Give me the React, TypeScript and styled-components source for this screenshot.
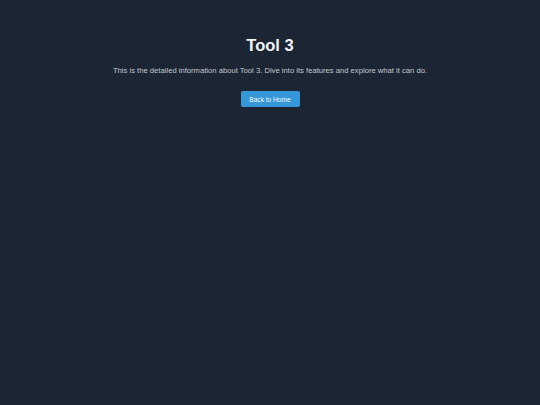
import React from "react";
import styled, { createGlobalStyle } from "styled-components";

const Global = createGlobalStyle`
  html, body { margin: 0; padding: 0; background: #1b2533; }
  body { font-family: "Liberation Sans", Arial, sans-serif; }
`;

const Page = styled.div`
  min-height: 405px;
  background: #1b2533;
  display: flex;
  flex-direction: column;
  align-items: center;
  padding-top: 35px;
  box-sizing: border-box;
`;

const Title = styled.h1`
  margin: 0;
  font-size: 16.5px;
  font-weight: 700;
  color: #f1f3f5;
  line-height: 20px;
`;

const Text = styled.p`
  margin: 11px 0 0;
  font-size: 7.65px;
  color: #c3c8cf;
  line-height: 10px;
`;

const Button = styled.button`
  margin-top: 15px;
  height: 16px;
  width: 59px;
  padding: 0;
  border: none;
  border-radius: 2px;
  background: #3597d8;
  color: #f4f8fb;
  font-family: "Liberation Sans", Arial, sans-serif;
  font-size: 6.6px;
  cursor: pointer;
`;

export default function App() {
  return (
    <>
      <Global />
      <Page>
        <Title>Tool 3</Title>
        <Text>
          This is the detailed information about Tool 3. Dive into its features and explore what it can do.
        </Text>
        <Button>Back to Home</Button>
      </Page>
    </>
  );
}
